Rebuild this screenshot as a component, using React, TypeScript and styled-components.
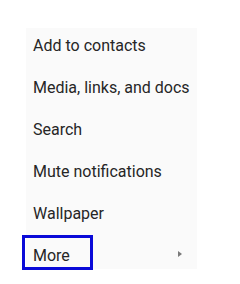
import styled, { createGlobalStyle } from "styled-components";

const GlobalStyle = createGlobalStyle`
  html, body {
    margin: 0;
    padding: 0;
    background: #ffffff;
  }
  body {
    font-family: Roboto, "Noto Sans", "Liberation Sans", sans-serif;
    -webkit-font-smoothing: antialiased;
  }
`;

const items = [
  "Add to contacts",
  "Media, links, and docs",
  "Search",
  "Mute notifications",
  "Wallpaper",
  "More",
];

const Page = styled.div`
  width: 240px;
  height: 284px;
  padding: 28px 0 0 26px;
  box-sizing: border-box;
`;

const Menu = styled.ul`
  list-style: none;
  margin: 0;
  padding: 0;
  width: 171px;
  height: 241px;
  background: #fafafa;
  display: flex;
  flex-direction: column;
`;

const Item = styled.li<{ $last?: boolean }>`
  position: relative;
  flex: none;
  height: ${({ $last }) => ($last ? "31px" : "42px")};
  padding: 8px 15px 0 7px;
  box-sizing: border-box;
  display: flex;
  align-items: flex-start;
  justify-content: space-between;
  font-size: 16px;
  line-height: 20px;
  color: #262626;
  white-space: nowrap;
`;

const Arrow = styled.span`
  width: 0;
  height: 0;
  margin-top: 5px;
  border-top: 3.5px solid transparent;
  border-bottom: 3.5px solid transparent;
  border-left: 4px solid #7a7a7a;
`;

const Focus = styled.div`
  position: absolute;
  left: -4px;
  top: -3px;
  width: 71px;
  height: 35px;
  box-sizing: border-box;
  border: 3px solid #0a0ad8;
  pointer-events: none;
`;

export default function App() {
  return (
    <>
      <GlobalStyle />
      <Page>
        <Menu>
          {items.map((label, i) => {
            const last = i === items.length - 1;
            return (
              <Item key={label} $last={last}>
                <span>{label}</span>
                {last && <Arrow />}
                {last && <Focus />}
              </Item>
            );
          })}
        </Menu>
      </Page>
    </>
  );
}
